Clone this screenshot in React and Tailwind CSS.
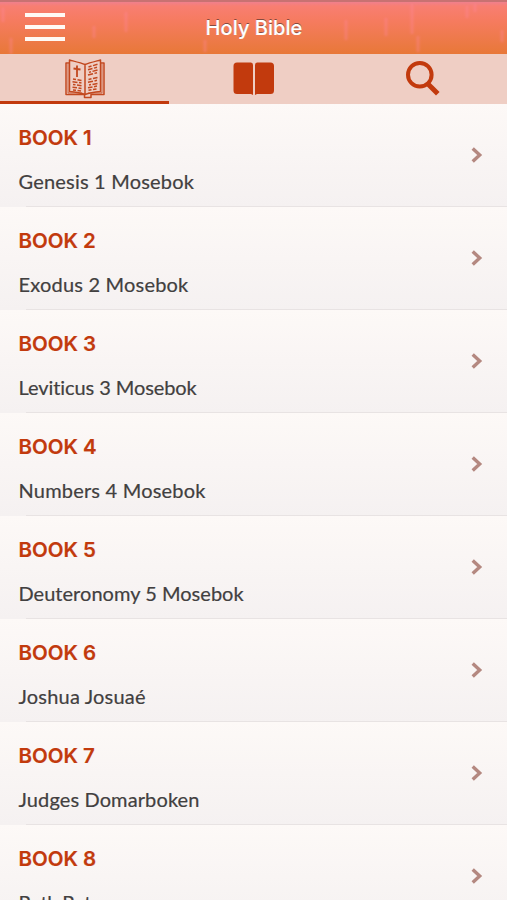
const books = [
  { id: 1, name: "Genesis 1 Mosebok", tracking: "tracking-[0.2px]" },
  { id: 2, name: "Exodus 2 Mosebok", tracking: "tracking-[0.2px]" },
  { id: 3, name: "Leviticus 3 Mosebok", tracking: "tracking-[-0.08px]" },
  { id: 4, name: "Numbers 4 Mosebok", tracking: "tracking-[0.2px]" },
  { id: 5, name: "Deuteronomy 5 Mosebok", tracking: "tracking-[0.03px]" },
  { id: 6, name: "Joshua Josuaé", tracking: "tracking-[0.2px]" },
  { id: 7, name: "Judges Domarboken", tracking: "tracking-[0.12px]" },
  { id: 8, name: "Ruth Rut", tracking: "tracking-[-0.6px]" },
];

function BibleIcon() {
  return (
    <svg width="40" height="40" viewBox="0 0 40 40" fill="none" stroke="#c2481f" strokeWidth="1.5" strokeLinejoin="round">
      <path d="M20 5.500C16 4 10 2.500 4.500 1v31.500C10 33 16 34 20 35.500 24 34 30 33 35.500 32.500V1C30 2.500 24 4 20 5.500zV35" />
      <path d="M4.500 4H1v31.500h18.500v3h6.500v-3H39V4h-3.500" />
      <path d="M3 5v29h14M37 5v29H23" strokeWidth="0.8" />
      <path d="M12 6.500V18M8.500 9.500l7 1" strokeWidth="1.8" />
      <path
        d="M8 20l3 .5m1.500.2 4 .8M7.500 22.700l5 .7m1.500.2 2.500.5M8 25.500l2.500.3m1.500.2 4.500.8M7.500 28.200l4.500.5m1.500.3 3 .5M8 31l3 .2m1.500.2 3.500.7M23.500 8l3-1m1.500-.4 4.500-1.300M23 10.700l4.500-1.200m1.500-.4 3-.8M24 13.400l2-.6m1.500-.4 5-1.400M23 16.100l5-1.300m1.500-.4 2.500-.7M23.500 20.500l3-.7m1.500-.4 4.500-1M23 23.200l5-1m1.500-.3 2.500-.6M24 26l2-.4m1.500-.2 5-1M23 28.700l4.500-.8m1.500-.2 3-.6M23.500 31.300l3-.5m1.500-.2 3.500-.6"
        strokeWidth="1.5"
      />
    </svg>
  );
}

function OpenBookIcon() {
  return (
    <svg width="42" height="34" viewBox="0 0 42 34" fill="#c23a0d">
      <path d="M4 .5h14Q20 .5 20 3v30l-2-1H4Q.5 32 .5 28.500V4Q.5 .5 4 .5z" />
      <path d="M24 .5h13.500Q41 .5 41 4v24.500Q41 32 37.500 32H24l-2 1V3Q22 .5 24 .5z" />
    </svg>
  );
}

function SearchIcon() {
  return (
    <svg width="34" height="35" viewBox="0 0 34 35" fill="none" stroke="#c23a0d">
      <circle cx="13.800" cy="13.800" r="11.800" strokeWidth="4" />
      <path d="M21.500 22.500l10.300 10.300" strokeWidth="5" />
    </svg>
  );
}

// faint vertical brush marks in the header background
function HeaderStreaks() {
  return (
    <svg className="pointer-events-none absolute inset-0 h-full w-full opacity-35 blur-[1px]" viewBox="0 0 507 52" fill="none" stroke="#ff88a0" strokeWidth="3">
      <path d="M3 6v14M11 36v16M126 10v20M94 24v12M205 38v12M346 18v20M386 16v18M412 2v30M418 34v16M467 4v12M475 2v8M502 28v12" />
    </svg>
  );
}

function BookRow({ book }) {
  return (
    <li className="relative flex h-[103px] shrink-0 items-center justify-between bg-linear-to-b from-[#fdf9f7] to-[#f5f1f1] pr-[24px] pl-[18.5px]">
      <div className="h-full pt-[20px]">
        <h2 className="font-[Inter,sans-serif] text-[20.5px] leading-[28px] font-semibold text-[#c23a0d] [-webkit-text-stroke:0.2px_#c23a0d]">
          BOOK {book.id}
        </h2>
        <p className={`mt-[15px] font-[Lato,sans-serif] text-[20px] leading-[28px] whitespace-nowrap text-[#424040] [-webkit-text-stroke:0.2px_#424040] ${book.tracking}`}>
          {book.name}
        </p>
      </div>
      <svg className="mb-[2px]" width="12" height="16" viewBox="0 0 12 16" fill="none" stroke="#b48880" strokeWidth="3.400">
        <path d="M1.700 1.500L8.700 8l-7 6.500" />
      </svg>
      <div className="absolute right-0 bottom-0 left-[26px] h-px bg-[#e8e3e3]" />
    </li>
  );
}

export default function App() {
  return (
    <div className="flex h-[900px] w-[507px] flex-col overflow-hidden bg-[#fdf9f7]">
      <header className="relative grid h-[54px] shrink-0 grid-cols-3 items-center overflow-hidden border-t-2 border-[#c87272] bg-[linear-gradient(to_bottom,#f0808c_0%,#f87e72_8%,#f67b60_35%,#ef7a4e_65%,#e87838_100%)]">
        <HeaderStreaks />
        <button className="relative mb-[2px] ml-[25px] flex w-[40px] flex-col gap-[8px]" aria-label="Menu">
          <span className="h-[4px] w-full bg-[#fffaf5]" />
          <span className="h-[4px] w-full bg-[#fffaf5]" />
          <span className="h-[4px] w-full bg-[#fffaf5]" />
        </button>
        <h1 className="relative pl-[1px] text-center font-[Inter,sans-serif] text-[20px] leading-[28px] font-medium tracking-[0.05px] whitespace-nowrap text-white [-webkit-text-stroke:0.2px_white] [text-shadow:0_-1px_0_#854a3f]">
          Holy Bible
        </h1>
      </header>

      <nav className="grid h-[50px] shrink-0 grid-cols-3 bg-[#efcec4]">
        <button className="flex items-start justify-center border-b-3 border-[#c23a0d] pt-[5px]" aria-label="Books">
          <BibleIcon />
        </button>
        <button className="flex items-start justify-center pt-[8px]" aria-label="Read">
          <OpenBookIcon />
        </button>
        <button className="flex items-start justify-center pt-[7px]" aria-label="Search">
          <SearchIcon />
        </button>
      </nav>

      <ul className="flex flex-col">
        {books.map((book) => (
          <BookRow key={book.id} book={book} />
        ))}
      </ul>
    </div>
  );
}
